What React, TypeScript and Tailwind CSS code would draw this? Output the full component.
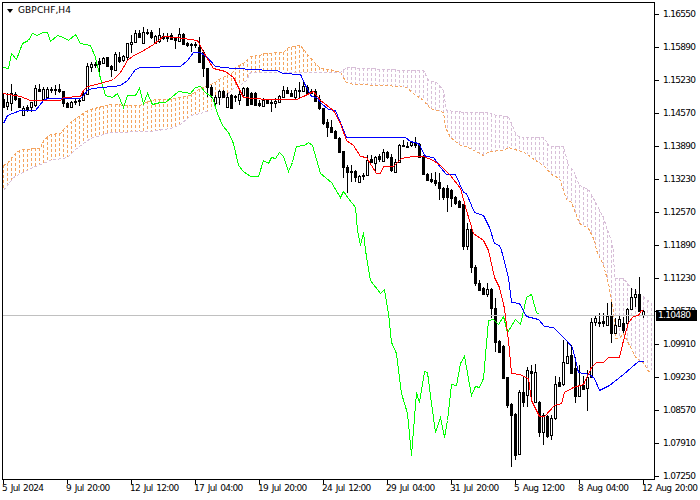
import React from 'react';

type Candle = [number, number, number, number, number?];

// rows are [high, bodyTop, bodyBottom, low, white?], read off the chart in 3x pixels
const firstRows: Candle[] = [
    [280, 298, 320, 325], [280, 305, 318, 330, 1], [252, 280, 308, 332, 1], [275, 283, 298, 302], [293, 293, 320, 325],
    [318, 325, 345, 345, 1], [315, 322, 327, 335], [305, 305, 322, 335, 1], [255, 265, 315, 322, 1], [252, 268, 274, 275],
    [262, 268, 296, 298, 1], [262, 266, 290, 292, 1], [262, 268, 268, 280], [255, 268, 268, 285], [252, 266, 272, 280],
    [272, 272, 310, 320], [306, 308, 320, 322], [303, 305, 320, 322, 1], [295, 302, 302, 315], [295, 300, 300, 318],
    [270, 282, 300, 302, 1], [188, 198, 282, 285, 1], [185, 193, 200, 215, 1], [185, 192, 192, 205], [175, 182, 192, 230],
    [170, 175, 188, 190, 1], [170, 172, 198, 200], [195, 198, 208, 230], [157, 162, 210, 212, 1], [155, 170, 182, 190],
    [165, 168, 180, 185, 1], [128, 130, 170, 182, 1], [105, 125, 131, 160, 1], [90, 98, 125, 130, 1], [90, 98, 112, 115],
    [80, 95, 130, 132, 1], [88, 97, 97, 105], [90, 95, 112, 118], [105, 108, 130, 132, 1], [85, 105, 122, 130, 1],
    [100, 108, 115, 120], [100, 108, 113, 125], [100, 105, 118, 120], [110, 113, 120, 148], [85, 102, 122, 125, 1],
    [98, 102, 132, 135], [125, 130, 135, 142], [128, 132, 132, 155], [125, 132, 132, 145], [112, 142, 185, 190],
    [150, 155, 205, 230], [205, 205, 260, 290], [255, 260, 285, 295], [285, 290, 308, 318, 1], [270, 272, 290, 315, 1],
    [270, 272, 290, 292], [280, 290, 322, 325, 1], [283, 285, 325, 328],
];

const middleRows: Candle[] = [
    [195, 198, 198, 215], [175, 192, 210, 225, 1], [172, 175, 195, 198, 1], [172, 175, 225, 228], [186, 188, 222, 225],
    [186, 188, 225, 228], [210, 220, 224, 230], [205, 210, 228, 232, 1], [208, 210, 220, 222], [208, 215, 215, 245],
    [205, 213, 220, 235, 1], [195, 197, 216, 218, 1], [168, 180, 200, 200, 1], [170, 180, 190, 192], [180, 190, 197, 200],
    [175, 180, 200, 210, 1], [155, 180, 180, 205], [150, 168, 182, 185, 1], [165, 170, 190, 195], [178, 182, 190, 192, 1],
    [178, 182, 212, 215], [195, 208, 235, 240], [235, 235, 278, 285], [268, 275, 292, 322], [270, 292, 305, 310],
    [300, 302, 325, 328], [322, 325, 366, 368], [363, 363, 412, 445], [405, 412, 425, 490], [405, 422, 422, 455],
    [420, 423, 440, 455], [435, 438, 455, 458, 1], [430, 436, 436, 450], [375, 390, 436, 438, 1], [375, 388, 397, 400],
    [378, 380, 398, 425, 1], [372, 378, 388, 395], [358, 367, 392, 397, 1], [362, 367, 382, 388], [372, 380, 420, 425],
    [388, 395, 425, 428, 1], [342, 345, 395, 397, 1], [330, 346, 346, 352], [335, 347, 347, 352], [332, 335, 346, 352, 1],
    [322, 335, 345, 355], [338, 342, 380, 382], [375, 378, 433, 435], [430, 433, 450, 452], [428, 448, 453, 458],
    [425, 450, 460, 468], [430, 457, 475, 510], [470, 475, 500, 510], [465, 475, 500, 545], [478, 480, 505, 530],
    [498, 500, 520, 525], [510, 512, 530, 535], [522, 522, 648, 660], [579, 597, 648, 660, 1],
];

const lastRows: Candle[] = [
    [-70, -63, 52, 70], [45, 52, 100, 108], [90, 98, 120, 122], [112, 115, 132, 133], [98, 118, 131, 140, 1],
    [115, 117, 175, 205], [145, 175, 275, 305], [270, 272, 305, 305], [285, 288, 383, 385], [380, 382, 465, 475],
    [460, 462, 495, 650], [490, 492, 615, 630], [420, 427, 613, 615, 1], [380, 427, 455, 472], [352, 360, 435, 470, 1],
    [345, 362, 370, 450], [342, 367, 455, 460, 1], [452, 455, 545, 560], [490, 495, 545, 585, 1], [495, 498, 558, 565],
    [495, 505, 555, 570, 1], [378, 403, 505, 510, 1], [380, 397, 407, 410], [270, 337, 403, 408, 1], [272, 318, 338, 340, 1],
    [285, 315, 368, 372], [320, 355, 437, 460], [345, 405, 437, 440, 1], [378, 405, 418, 420], [360, 382, 415, 482, 1],
    [205, 215, 380, 385, 1], [195, 205, 215, 228, 1], [190, 215, 215, 232], [188, 213, 220, 232], [160, 198, 225, 228, 1],
    [155, 198, 250, 280], [205, 225, 248, 250, 1], [198, 207, 228, 232, 1], [200, 220, 240, 250], [175, 178, 218, 222, 1],
    [115, 142, 178, 180, 1], [118, 132, 142, 170, 1], [82, 132, 183, 185], [180, 183, 195, 205, 1],
];

const toPage = (rows: Candle[], offset: number): Candle[] =>
    rows.map(([h, t, b, l, w]) => [offset + h / 3, offset + t / 3, offset + b / 3, offset + l / 3, w]);

const candles = [...toPage(firstRows, 0), ...toPage(middleRows, 30), ...toPage(lastRows, 250)];

// line points as x,y page pixels
const senkouA = [
    3, 165, 7, 163, 13, 155, 20, 149, 40, 148, 43, 140, 50, 134, 60, 133, 65, 127, 70, 122, 80, 115, 87, 110, 90, 109,
    110, 104, 130, 105, 140, 105, 145, 102, 155, 99, 170, 99, 180, 97, 190, 95, 200, 88, 215, 82, 220, 78, 233, 72,
    235, 67, 243, 63, 250, 56, 260, 55, 263, 53, 283, 52, 288, 47, 300, 45, 308, 55, 315, 63, 320, 68, 330, 69, 340, 72,
    346, 82, 353, 84, 386, 85, 406, 87, 413, 93, 423, 100, 430, 108, 443, 112, 445, 127, 450, 137, 460, 145, 466, 146,
    483, 155, 489, 151, 503, 150, 508, 147, 524, 152, 531, 157, 544, 166, 551, 174, 559, 178, 566, 199, 571, 202,
    579, 223, 588, 228, 594, 240, 596, 250, 603, 265, 608, 283, 613, 310, 615, 338, 619, 338, 623, 333, 629, 345,
    636, 358, 643, 362, 648, 371, 651, 370,
];

const senkouB = [
    3, 190, 13, 177, 30, 168, 50, 160, 67, 157, 75, 149, 83, 143, 90, 138, 110, 132, 150, 131, 170, 128, 180, 124,
    190, 115, 200, 113, 210, 110, 220, 100, 233, 88, 240, 85, 246, 80, 250, 72, 340, 72, 346, 67, 406, 70, 423, 70,
    428, 80, 436, 82, 443, 90, 446, 110, 465, 112, 486, 112, 496, 115, 508, 116, 516, 135, 523, 137, 543, 137, 549, 146,
    563, 146, 568, 165, 573, 170, 579, 185, 588, 189, 594, 200, 603, 217, 606, 227, 611, 240, 613, 250, 614, 278,
    623, 278, 631, 288, 641, 295, 651, 303,
];

const tenkan = [
    3, 93, 20, 96, 30, 100, 60, 100, 63, 97, 80, 96, 83, 90, 87, 86, 100, 83, 113, 79, 120, 72, 127, 60, 133, 55, 140, 52,
    153, 44, 163, 36, 175, 37, 183, 38, 197, 40, 205, 55, 213, 68, 225, 71, 233, 77, 243, 97, 266, 99, 296, 99, 303, 96,
    313, 91, 320, 100, 333, 110, 340, 123, 346, 140, 353, 145, 360, 156, 366, 157, 376, 173, 380, 173, 383, 166, 393, 166,
    401, 158, 413, 156, 423, 156, 433, 160, 440, 165, 450, 175, 460, 188, 466, 210, 473, 233, 483, 240, 488, 250,
    494, 277, 499, 287, 504, 308, 508, 340, 511, 373, 519, 374, 528, 378, 531, 400, 539, 416, 544, 416, 554, 405,
    561, 403, 564, 392, 573, 387, 583, 384, 591, 367, 596, 362, 603, 362, 608, 357, 619, 357, 623, 340, 628, 322,
    633, 316, 638, 315, 641, 310, 643, 311,
];

const kijun = [
    3, 123, 7, 115, 20, 110, 35, 110, 43, 100, 47, 98, 80, 98, 83, 95, 88, 89, 100, 87, 113, 86, 120, 85, 127, 80, 135, 69,
    140, 67, 180, 66, 187, 60, 193, 52, 200, 52, 207, 57, 215, 66, 233, 68, 243, 68, 246, 69, 276, 70, 283, 73, 300, 74,
    305, 85, 311, 96, 316, 97, 321, 103, 328, 109, 335, 110, 346, 137, 405, 137, 410, 141, 418, 143, 425, 156, 433, 157,
    440, 167, 446, 174, 455, 174, 463, 192, 466, 193, 474, 212, 483, 215, 489, 227, 494, 243, 499, 245, 501, 250,
    508, 277, 511, 302, 519, 303, 526, 316, 538, 319, 544, 326, 553, 327, 566, 340, 572, 347, 578, 372, 589, 374,
    594, 378, 599, 390, 609, 385, 623, 374, 631, 367, 638, 361, 643, 361,
];

const chikou = [
    3, 67, 8, 68, 11, 53, 16, 59, 22, 43, 28, 40, 32, 33, 37, 35, 42, 32, 47, 32, 50, 41, 57, 35, 63, 37, 68, 40, 75, 34,
    80, 43, 90, 45, 95, 57, 100, 78, 105, 95, 112, 97, 117, 93, 123, 107, 127, 95, 135, 95, 139, 88, 143, 103, 147, 93,
    152, 104, 160, 102, 165, 102, 178, 91, 190, 93, 195, 87, 200, 86, 205, 92, 212, 97, 217, 113, 222, 125, 228, 132,
    233, 143, 238, 165, 243, 171, 250, 176, 258, 176, 263, 160, 268, 163, 271, 157, 275, 158, 279, 152, 283, 156,
    288, 171, 292, 162, 296, 146, 304, 145, 308, 142, 312, 145, 320, 173, 331, 182, 340, 197, 343, 191, 348, 198,
    355, 207, 357, 230, 360, 245, 363, 232, 365, 250, 370, 280, 380, 293, 384, 289, 388, 313, 391, 342, 396, 353,
    401, 393, 407, 413, 411, 455, 414, 417, 416, 392, 419, 402, 424, 371, 427, 372, 431, 403, 435, 432, 440, 417,
    444, 437, 447, 420, 451, 384, 456, 385, 460, 363, 464, 356, 466, 367, 471, 395, 475, 386, 479, 387, 483, 378,
    488, 320, 493, 319, 498, 324, 503, 316, 507, 332, 515, 319, 520, 324, 526, 297, 531, 294, 536, 312, 539, 314,
];

const points = (line: number[]) => {
    let out = '';
    for (let i = 0; i < line.length; i += 2) out += `${line[i] + 0.5},${line[i + 1] + 0.5} `;
    return out;
};

const yAt = (line: number[], x: number) => {
    for (let i = 0; i < line.length - 2; i += 2) {
        if (x >= line[i] && x <= line[i + 2]) {
            const t = (x - line[i]) / (line[i + 2] - line[i]);
            return line[i + 1] + (line[i + 3] - line[i + 1]) * t;
        }
    }
    return line[line.length - 1];
};

const prices = [
    '1.16550', '1.15890', '1.15230', '1.14570', '1.13890', '1.13230', '1.12570', '1.11890', '1.11230', '1.10570',
    '1.09910', '1.09230', '1.08570', '1.07910', '1.07250',
];

const times = [
    '5 Jul 2024', '9 Jul 20:00', '12 Jul 12:00', '17 Jul 04:00', '19 Jul 20:00', '24 Jul 12:00', '29 Jul 04:00',
    '31 Jul 20:00', '5 Aug 12:00', '8 Aug 04:00', '12 Aug 20:00',
];

function Cloud() {
    const bars = [];
    for (let x = 3; x <= 651; x += 4) {
        const a = yAt(senkouA, x);
        const b = yAt(senkouB, x);
        bars.push(
            <line
                key={x}
                x1={x + 0.5}
                x2={x + 0.5}
                y1={Math.min(a, b)}
                y2={Math.max(a, b)}
                stroke={a < b ? '#f4a460' : '#d8bfd8'}
                strokeDasharray="3 2"
            />
        );
    }
    return <g>{bars}</g>;
}

function Candles() {
    return (
        <g>
            {candles.map(([h, t, b, l, white], i) => {
                const x = 3 + i * 4;
                const top = Math.round(t);
                const height = Math.max(Math.round(b) - top, 1);
                return (
                    <g key={i}>
                        <line x1={x + 0.5} x2={x + 0.5} y1={Math.round(h)} y2={Math.round(l)} stroke="#000" />
                        <rect
                            x={x - 0.5}
                            y={top + 0.5}
                            width={2}
                            height={height}
                            fill={white ? '#fff' : '#000'}
                            stroke="#000"
                        />
                    </g>
                );
            })}
        </g>
    );
}

export default function App() {
    return (
        <div
            className="relative w-[700px] h-[500px] overflow-hidden bg-white pt-[2px] text-[9px] leading-[11px] tracking-[-0.7px] text-black"
            style={{ fontFamily: '"DejaVu Sans", sans-serif' }}
        >
            <div className="flex h-[478px] pl-[2px]">
                <div className="relative w-[653px] h-[478px] shrink-0 border border-black">
                    <svg width={651} height={476} viewBox="3 3 651 476" shapeRendering="crispEdges" className="block">
                        <Cloud />
                        <polyline points={points(senkouA)} fill="none" stroke="#f4a460" strokeDasharray="3 2" />
                        <polyline points={points(senkouB)} fill="none" stroke="#d8bfd8" strokeDasharray="3 2" />
                        <Candles />
                        <line x1={3} x2={654} y1={315.5} y2={315.5} stroke="#c0c0c0" />
                        <polyline points={points(chikou)} fill="none" stroke="#00ff00" />
                        <polyline points={points(kijun)} fill="none" stroke="#0000ff" />
                        <polyline points={points(tenkan)} fill="none" stroke="#ff0000" />
                    </svg>
                    <div className="absolute left-[4px] top-[2px] flex items-center gap-[5px] h-[11px]">
                        <svg width={6} height={4} viewBox="0 0 6 4" className="block">
                            <polygon points="0,0 6,0 3,4" fill="#000" />
                        </svg>
                        <span className="tracking-[0.1px]">GBPCHF,H4</span>
                    </div>
                </div>
                <div className="flex flex-col gap-[22px] pt-[7px]">
                    {prices.map((price) => (
                        <div key={price} className="flex items-center h-[11px] shrink-0">
                            <div className="w-[4px] h-px bg-black" />
                            <span className="ml-[4px]">{price}</span>
                        </div>
                    ))}
                </div>
            </div>
            <div className="flex pl-[3px]">
                {times.map((time) => (
                    <div key={time} className="w-[64px] shrink-0">
                        <div className="w-px h-[4px] bg-black" />
                        <div className="ml-[-1px] mt-[-1px] whitespace-nowrap [word-spacing:1.5px]">{time}</div>
                    </div>
                ))}
            </div>
            <div className="absolute left-[656px] top-[310px] flex items-center w-[41px] h-[11px] pl-[2px] bg-black text-white">
                1.10480
            </div>
        </div>
    );
}
